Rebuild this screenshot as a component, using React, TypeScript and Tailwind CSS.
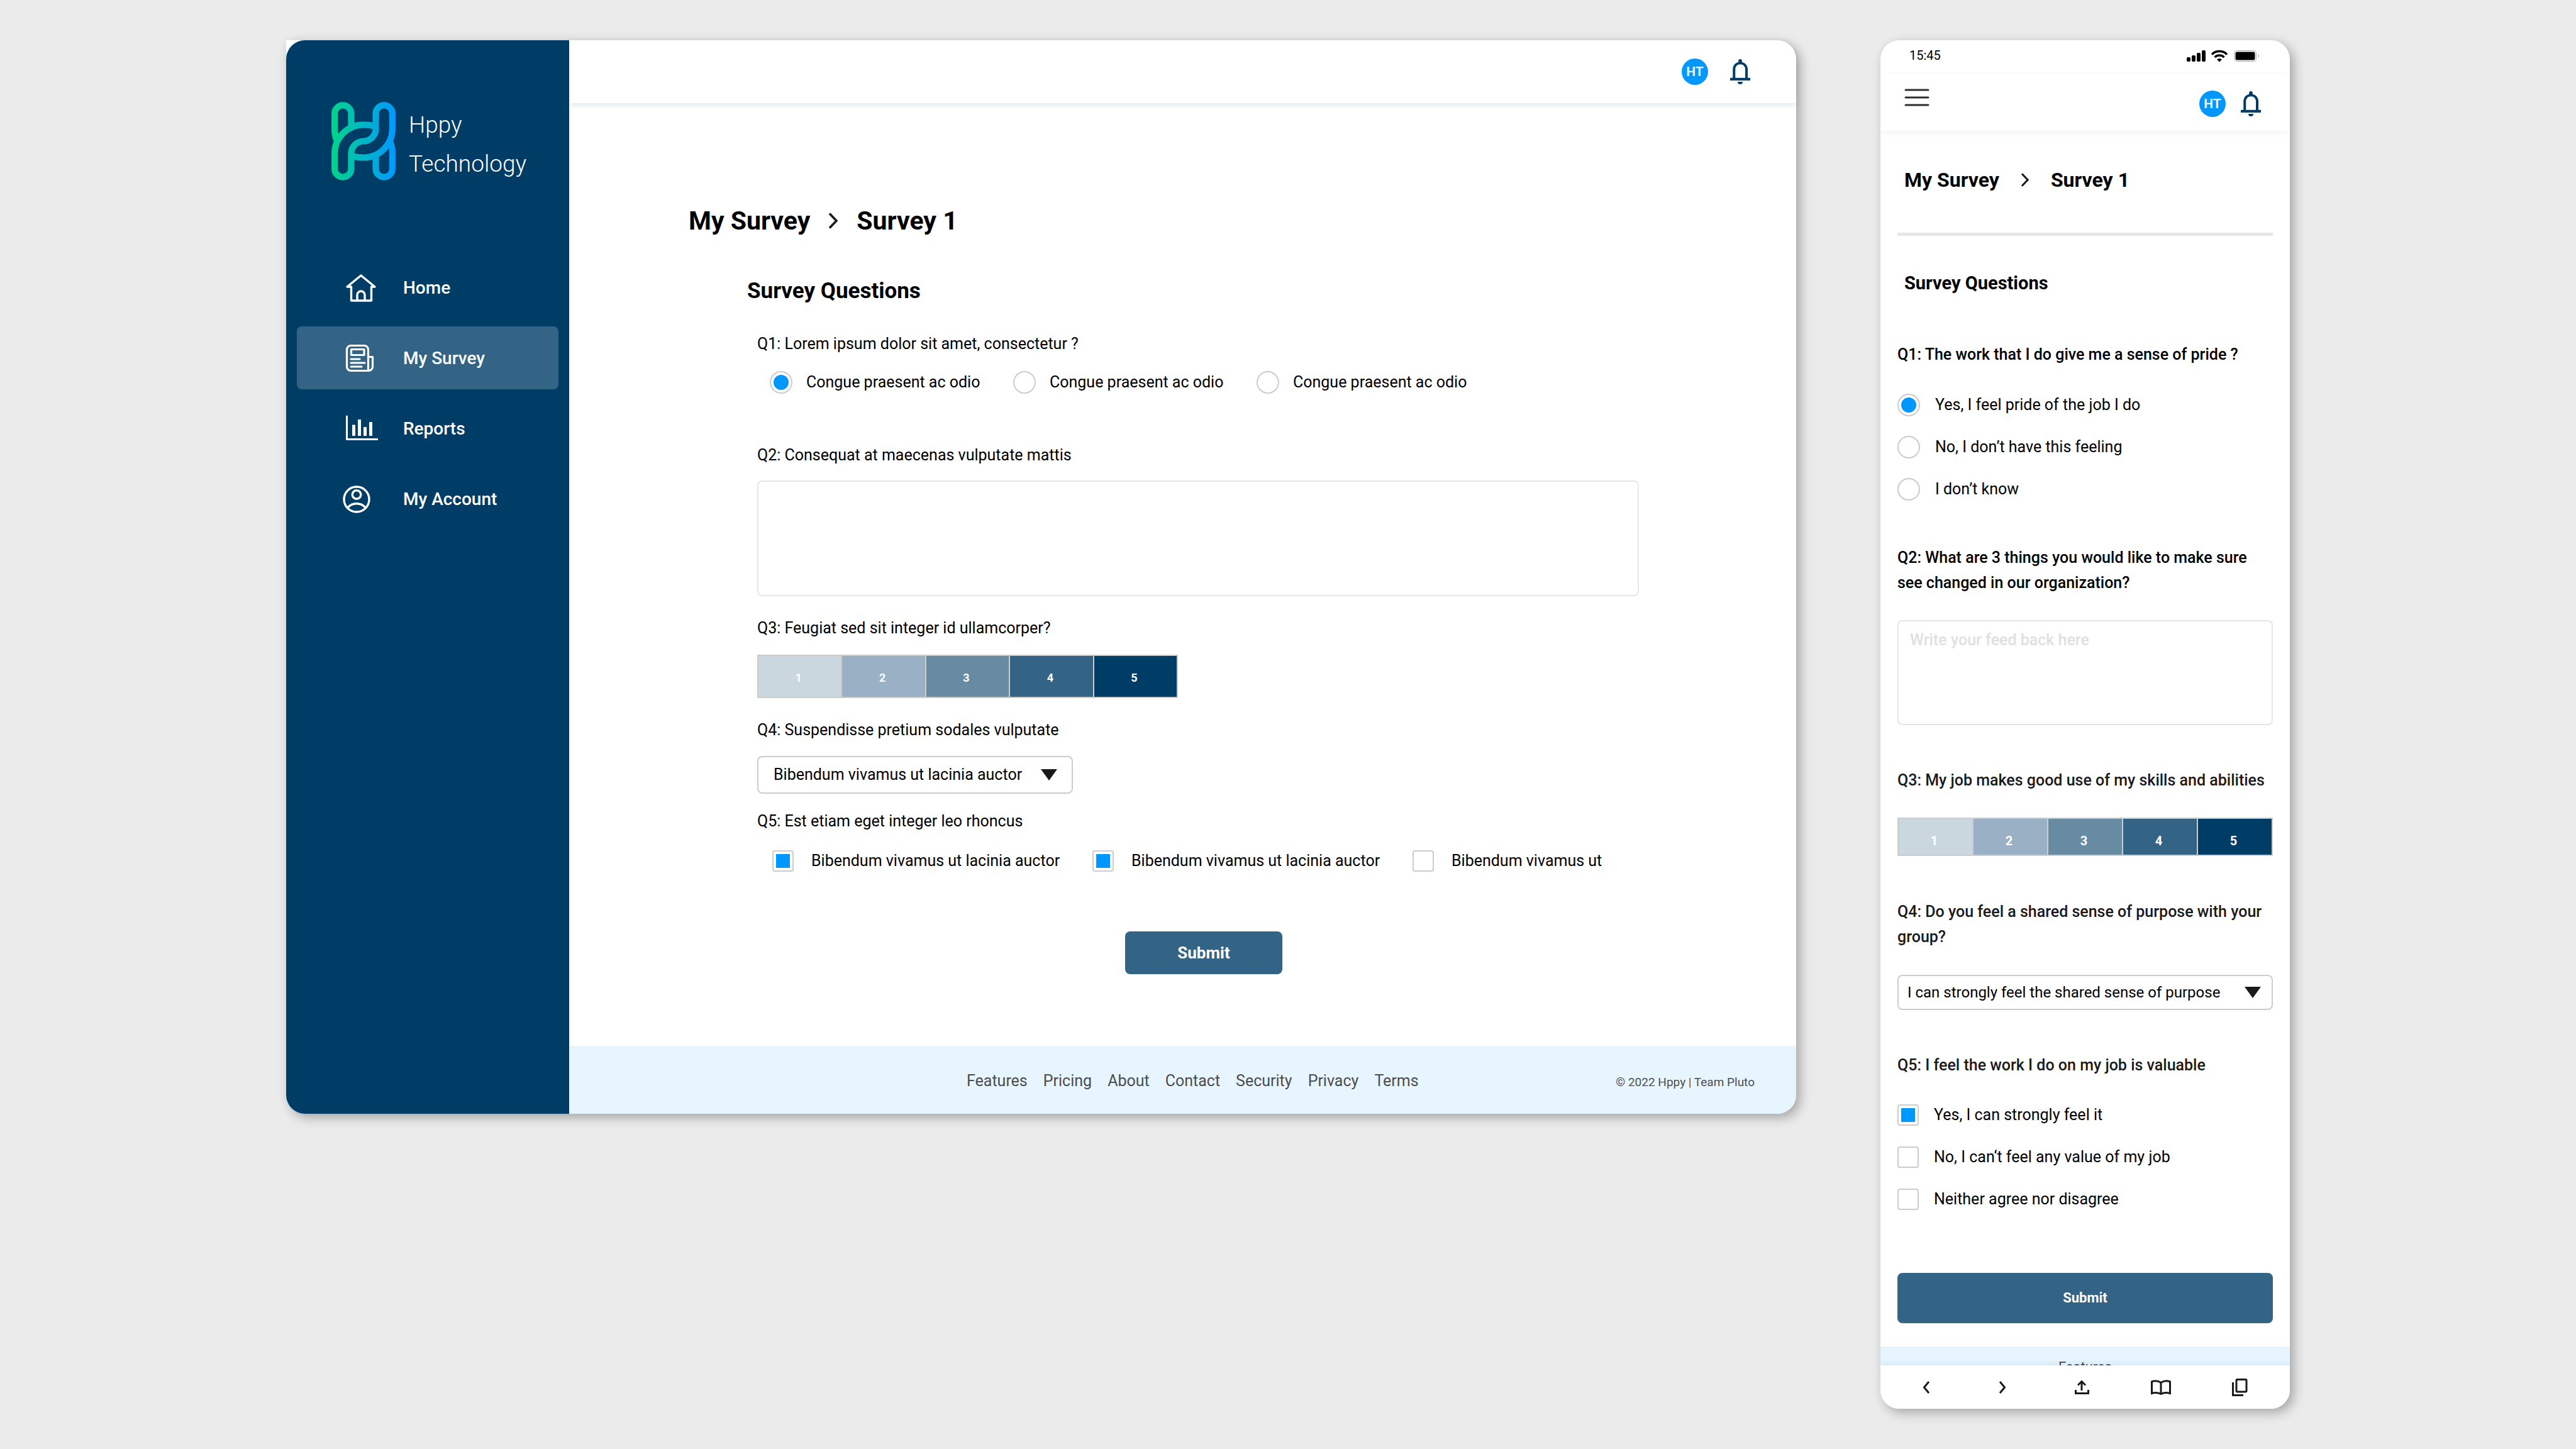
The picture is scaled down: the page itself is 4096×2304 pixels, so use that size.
import React from "react";

const ratingColors = [
  "bg-[#cbd7df]",
  "bg-[#9ab0c4]",
  "bg-[#678ba3]",
  "bg-[#336485]",
  "bg-[#003d66]",
];

const footerLinks = [
  "Features",
  "Pricing",
  "About",
  "Contact",
  "Security",
  "Privacy",
  "Terms",
];

const Logo = () => (
  <svg viewBox="0 0 144 176" className="w-[102px] h-[125px] shrink-0" fill="none">
    <defs>
      <linearGradient id="logo" gradientUnits="userSpaceOnUse" x1="0" y1="88" x2="144" y2="88">
        <stop offset="0" stopColor="#00d48a" />
        <stop offset="1" stopColor="#0098ff" />
      </linearGradient>
    </defs>
    <g stroke="url(#logo)" strokeWidth="14.4">
      <path d="M44.4 54V26A18.6 18.6 0 0 0 7.2 26V62Q7.2 76 13 88" />
      <path d="M99.6 122V150A18.6 18.6 0 0 0 136.8 150V114Q136.8 100 131 88" />
      <path d="M97 54Q84 51 72 51A64.8 64.8 0 0 0 7.2 116V150A18.6 18.6 0 0 0 44.4 150V116A28 28 0 0 1 72 88" />
      <path d="M47 122Q60 125 72 125A64.8 64.8 0 0 0 136.8 60V26A18.6 18.6 0 0 0 99.6 26V60A28 28 0 0 1 72 88" />
    </g>
  </svg>
);

const HomeIcon = () => (
  <g strokeWidth="3.4">
    <path d="M7 23L29 5L51 23H45.5V45H13.5V23Z" />
    <path d="M23 45V36A6 6 0 0 1 35 36V45" />
  </g>
);

const SurveyIcon = () => (
  <g strokeWidth="3.2">
    <path d="M40.5 44.5V11A6.5 6.5 0 0 0 34 4.5H13A6.5 6.5 0 0 0 6.5 11V38A6.5 6.5 0 0 0 13 44.5H41A6.5 6.5 0 0 0 47.5 38V22.5H40.5" />
    <path d="M13.5 10.5H34V19.5H13.5Z" />
    <path d="M13 26H27M13 32H35M13 38H30" />
  </g>
);

const ReportsIcon = () => (
  <g strokeWidth="3">
    <path d="M6.5 5V41.5H55" />
    <path d="M15 18.5H20V36H15ZM24 10H29V36H24ZM33 22H38V36H33ZM42 14H47V36H42Z" fill="white" stroke="none" />
  </g>
);

const AccountIcon = () => (
  <g strokeWidth="3.4">
    <circle cx="22" cy="25" r="20" />
    <circle cx="22" cy="17.5" r="6.8" />
    <path d="M7.5 38.5A19 19 0 0 1 36.5 38.5" />
  </g>
);

const navItems = [
  { label: "Home", Icon: HomeIcon, active: false },
  { label: "My Survey", Icon: SurveyIcon, active: true },
  { label: "Reports", Icon: ReportsIcon, active: false },
  { label: "My Account", Icon: AccountIcon, active: false },
];

const UserActions = ({ className }: { className: string }) => (
  <div className={`flex items-center ${className}`}>
    <button className="size-[42px] rounded-full bg-[#0098ff] text-[#e6f5ff] text-[21px] leading-[42px] font-bold">
      HT
    </button>
    <button aria-label="Notifications">
      <svg viewBox="0 0 45.3 56.5" className="w-8 h-10" fill="#003d66">
        <path
          fillRule="evenodd"
          d="M0 42H6V23C6 14.5 11 8.5 18.7 6.5V4A4 4 0 0 1 26.7 4V6.5C34.5 8.5 39.7 14.5 39.7 23V42H45.3V48H0ZM11.7 42H34V23C34 16 29.5 11.5 22.8 11.5S11.7 16 11.7 23Z"
        />
        <path d="M17 51H28.3A5.65 5.5 0 0 1 17 51Z" />
      </svg>
    </button>
  </div>
);

const Chevron = ({ className }: { className: string }) => (
  <svg viewBox="0 0 16 26" className={className} fill="none" stroke="#1a1a1a">
    <path d="M2 1.5L13 13L2 24.5" strokeWidth="3.6" />
  </svg>
);

type ChoiceProps = {
  type: "radio" | "checkbox";
  name: string;
  label: string;
  checked?: boolean;
  className?: string;
};

const Choice = ({ type, name, label, checked, className = "" }: ChoiceProps) => (
  <label className={`flex items-center h-10 ${className}`}>
    <input
      type={type}
      name={name}
      defaultChecked={checked}
      className={`appearance-none shrink-0 border-2 border-[#cccccc] p-1 bg-clip-content checked:bg-[#0098ff] ${
        type === "radio" ? "size-9 rounded-full" : "size-[34px] rounded-sm"
      }`}
    />
    <span className="whitespace-nowrap">{label}</span>
  </label>
);

const Rating = ({ className, label }: { className: string; label: string }) => (
  <div
    role="group"
    aria-label={label}
    className={`flex border-2 border-[#cccccc] divide-x-2 divide-[#cccccc] text-white font-bold ${className}`}
  >
    {ratingColors.map((color, i) => (
      <button key={color} type="button" className={`flex-1 pt-1 pr-1 ${color}`}>
        {i + 1}
      </button>
    ))}
  </div>
);

type DropdownProps = { id: string; value: string; className: string; arrow: string };

const Dropdown = ({ id, value, className, arrow }: DropdownProps) => (
  <div className={`relative ${className}`}>
    <select
      id={id}
      className="appearance-none size-full bg-white border-2 border-[#cccccc] rounded-lg text-black"
    >
      <option>{value}</option>
    </select>
    <svg
      viewBox="0 0 26 18"
      className={`absolute top-1/2 -translate-y-1/2 pointer-events-none w-[26px] h-[18px] ${arrow}`}
      fill="#1a1a1a"
    >
      <path d="M0 0H26L13 18Z" />
    </svg>
  </div>
);

const Sidebar = () => (
  <aside className="w-[450px] shrink-0 bg-[#003d66] text-white rounded-l-[30px] px-[17px] pt-[98px]">
    <div className="flex items-start gap-[21px] pl-[55px]">
      <Logo />
      <p className="pt-1.5 text-[37px] leading-[62px] font-light">
        Hppy
        <br />
        Technology
      </p>
    </div>
    <nav className="mt-[115px] flex flex-col gap-3">
      {navItems.map(({ label, Icon, active }) => (
        <a
          key={label}
          href="#"
          className={`flex items-center gap-10 h-[100px] pl-[73px] rounded-lg text-[28px] font-medium ${
            active ? "bg-[#336485]" : ""
          }`}
        >
          <svg viewBox="0 0 56 48" className="w-14 h-12" fill="none" stroke="white" strokeLinecap="round" strokeLinejoin="round">
            <Icon />
          </svg>
          <span className="pt-0.5">{label}</span>
        </a>
      ))}
    </nav>
  </aside>
);

const DesktopForm = () => (
  <form className="mt-[39px] pl-[299px] pr-[250px]">
    <fieldset>
      <legend>Q1: Lorem ipsum dolor sit amet, consectetur ?</legend>
      <div className="flex mt-[21px] pl-5">
        {[0, 1, 2].map((i) => (
          <Choice
            key={i}
            type="radio"
            name="desktop-q1"
            label="Congue praesent ac odio"
            checked={i === 0}
            className="w-[387px] gap-[22px]"
          />
        ))}
      </div>
    </fieldset>

    <label htmlFor="desktop-q2" className="block mt-[76px]">
      Q2: Consequat at maecenas vulputate mattis
    </label>
    <textarea
      id="desktop-q2"
      className="block mt-5 w-full h-[184px] border-2 border-[#e6e6e6] rounded-lg resize-none p-5"
    />

    <p className="mt-[31px]">Q3: Feugiat sed sit integer id ullamcorper?</p>
    <Rating label="Q3" className="mt-[22px] w-[669px] h-[69px] text-[18px]" />

    <label htmlFor="desktop-q4" className="block mt-[31px]">
      Q4: Suspendisse pretium sodales vulputate
    </label>
    <Dropdown
      id="desktop-q4"
      value="Bibendum vivamus ut lacinia auctor"
      className="mt-[21px] w-[502px] h-[60px] [&>select]:pl-6"
      arrow="right-[25px]"
    />

    <fieldset className="mt-6">
      <legend>Q5: Est etiam eget integer leo rhoncus</legend>
      <div className="flex mt-[23px] pl-6">
        <Choice type="checkbox" name="desktop-q5" label="Bibendum vivamus ut lacinia auctor" checked className="w-[509px] gap-7" />
        <Choice type="checkbox" name="desktop-q5" label="Bibendum vivamus ut lacinia auctor" checked className="w-[509px] gap-7" />
        <Choice type="checkbox" name="desktop-q5" label="Bibendum vivamus ut" className="gap-7" />
      </div>
    </fieldset>

    <button
      type="button"
      className="block mt-[92px] ml-[585px] w-[250px] h-[68px] rounded-lg bg-[#336485] text-white text-[26px] font-bold"
    >
      Submit
    </button>
  </form>
);

const DesktopWindow = () => (
  <section className="flex flex-1 bg-white rounded-[30px] rounded-tl-none shadow-[6px_6px_18px_rgba(0,0,0,0.3)]">
    <Sidebar />
    <div className="flex-1 flex flex-col">
      <header className="flex justify-end h-[100px] pr-[73px] rounded-tr-[30px] shadow-[0_3px_8px_rgba(0,61,102,0.12)]">
        <UserActions className="gap-[35px]" />
      </header>
      <main className="pt-[157px] pb-[114px]">
        <h1 className="flex items-center gap-[29px] pl-[190px] text-[41px] leading-[60px] font-bold">
          <a href="#">My Survey</a>
          <Chevron className="w-4 h-[26px]" />
          <span>Survey 1</span>
        </h1>
        <h2 className="mt-[57px] pl-[283px] text-[35px] leading-[50px] font-bold">
          Survey Questions
        </h2>
        <DesktopForm />
      </main>
      <footer className="flex items-center justify-between h-[108px] pt-1 pl-[632px] pr-[66px] bg-[#e6f5ff] text-[#4d4d4d] rounded-br-[30px]">
        <nav className="flex gap-[25px]">
          {footerLinks.map((link) => (
            <a key={link} href="#">
              {link}
            </a>
          ))}
        </nav>
        <small className="pt-1 text-[19px]">© 2022 Hppy | Team Pluto</small>
      </footer>
    </div>
  </section>
);

const StatusBar = () => (
  <div className="flex items-start justify-between h-[53px] pt-3 pl-[46px] pr-[47px]">
    <span className="text-[20px] leading-6">15:45</span>
    <svg viewBox="0 0 117 24" className="w-[117px] h-6">
      <g>
        <rect x="0" y="15" width="6" height="7" rx="2" />
        <rect x="8" y="12" width="6" height="10" rx="2" />
        <rect x="16" y="8" width="6" height="14" rx="2" />
        <rect x="24" y="4" width="6" height="18" rx="2" />
      </g>
      <g fill="none" stroke="black" strokeWidth="3.6">
        <path d="M40 10.5A17 17 0 0 1 64 10.5" />
        <path d="M44.5 15A11 11 0 0 1 59.5 15" />
      </g>
      <path d="M48 18.5Q52 15.5 56 18.5L52 22.5Z" />
      <rect x="75.5" y="4.5" width="35" height="17" rx="4" fill="none" stroke="#aaaaaa" />
      <rect x="77.5" y="6.5" width="31" height="13" rx="2.5" />
      <path d="M113.5 10Q116.5 13 113.5 16Z" fill="#aaaaaa" />
    </svg>
  </div>
);

const PhoneForm = () => (
  <form className="mt-[74px] px-[27px]">
    <fieldset>
      <legend className="font-medium">Q1: The work that I do give me a sense of pride ?</legend>
      <div className="mt-10 flex flex-col gap-[27px]">
        <Choice type="radio" name="phone-q1" label="Yes, I feel pride of the job I do" checked className="gap-6" />
        <Choice type="radio" name="phone-q1" label="No, I don’t have this feeling" className="gap-6" />
        <Choice type="radio" name="phone-q1" label="I don’t know" className="gap-6" />
      </div>
    </fieldset>

    <label htmlFor="phone-q2" className="block mt-[69px] font-medium">
      Q2: What are 3 things you would like to make sure see changed in our organization?
    </label>
    <textarea
      id="phone-q2"
      placeholder="Write your feed back here"
      className="block mt-[39px] w-full h-[167px] border-2 border-[#e6e6e6] rounded-lg resize-none px-[18px] py-2.5 font-medium placeholder:text-[#e0e0e0]"
    />

    <p className="mt-[68px] font-medium text-[#1a1a1a] whitespace-nowrap">
      Q3: My job makes good use of my skills and abilities
    </p>
    <Rating label="Q3" className="mt-[39px] h-[61px] text-[20px] [&>button]:pt-3" />

    <label htmlFor="phone-q4" className="block mt-[69px] font-medium text-[#1a1a1a]">
      Q4: Do you feel a shared sense of purpose with your group?
    </label>
    <Dropdown
      id="phone-q4"
      value="I can strongly feel the shared sense of purpose"
      className="mt-10 h-14 [&>select]:pl-[14px] text-[24px]"
      arrow="right-[19px]"
    />

    <fieldset className="mt-[68px]">
      <legend className="font-medium text-[#1a1a1a]">Q5: I feel the work I do on my job is valuable</legend>
      <div className="mt-[39px] flex flex-col gap-[27px]">
        <Choice type="checkbox" name="phone-q5" label="Yes, I can strongly feel it" checked className="gap-6" />
        <Choice type="checkbox" name="phone-q5" label="No, I can‘t feel any value of my job" className="gap-6" />
        <Choice type="checkbox" name="phone-q5" label="Neither agree nor disagree" className="gap-6" />
      </div>
    </fieldset>

    <button
      type="button"
      className="block mt-[97px] w-full h-20 rounded-lg bg-[#336485] text-white text-[22px] font-bold"
    >
      Submit
    </button>
  </form>
);

const browserActions = [
  { label: "Back", d: "M27 11L19.5 20L27 29" },
  { label: "Forward", d: "M15 11L22.5 20L15 29" },
  { label: "Share", d: "M20 25V11M14 16.5L20 10.5L26 16.5M10.5 24V29.5H30.5V24" },
  {
    label: "Bookmarks",
    d: "M20 12.5V30.5M20 12.5Q13 8 5.5 11V29.5Q13 27 20 30.5Q27 27 34.5 29.5V11Q27 8 20 12.5",
  },
  {
    label: "Tabs",
    d: "M16.5 7.5H29.5Q31 7.5 31 9V25.5Q31 27 29.5 27H16.5Q15 27 15 25.5V9Q15 7.5 16.5 7.5M9.5 12V32.5H26",
  },
];

const PhoneWindow = () => (
  <section className="w-[651px] shrink-0 bg-white rounded-[30px] overflow-hidden shadow-[6px_6px_18px_rgba(0,0,0,0.3)]">
    <StatusBar />
    <header className="flex items-start justify-between h-[91px] pt-6 pl-[38px] pr-[46px] shadow-[0_3px_10px_rgba(0,0,0,0.05)]">
      <button aria-label="Menu">
        <svg viewBox="0 0 40 28" className="w-10 h-7" stroke="#2b302e" strokeWidth="3" strokeLinecap="round">
          <path d="M2 2H38M2 14H38M2 26H38" />
        </svg>
      </button>
      <UserActions className="gap-6 h-12" />
    </header>
    <main className="pt-[54px]">
      <h1 className="flex items-center gap-[34px] pl-[38px] text-[32px] leading-[48px] font-bold">
        <a href="#">My Survey</a>
        <Chevron className="w-[14px] h-[22px]" />
        <span>Survey 1</span>
      </h1>
      <hr className="mt-[60px] mx-[27px] border-t-[5px] border-[#e6e6e6]" />
      <h2 className="mt-[55px] pl-[38px] text-[29px] leading-10 font-bold">Survey Questions</h2>
      <PhoneForm />
    </main>
    <footer className="mt-[37px] h-[30px] pt-[15px] overflow-hidden bg-[#e6f5ff] text-center text-[22px] leading-9 text-[#4d4d4d]">
      <a href="#">Features</a>
    </footer>
    <nav className="relative grid grid-cols-5 items-center justify-items-center h-[69px] pl-[7px] pr-[17px] bg-white shadow-[0_-3px_8px_rgba(0,61,102,0.08)]">
      {browserActions.map(({ label, d }) => (
        <button key={label} aria-label={label}>
          <svg viewBox="0 0 40 40" className="size-10" fill="none" stroke="#1a1a1a" strokeWidth="3">
            <path d={d} />
          </svg>
        </button>
      ))}
    </nav>
  </section>
);

export default function App() {
  return (
    <div className="min-h-screen flex items-start gap-[134px] px-[455px] py-16 bg-[#ebebeb] font-[Roboto,sans-serif] text-[25px] leading-10 text-black">
      <DesktopWindow />
      <PhoneWindow />
    </div>
  );
}
